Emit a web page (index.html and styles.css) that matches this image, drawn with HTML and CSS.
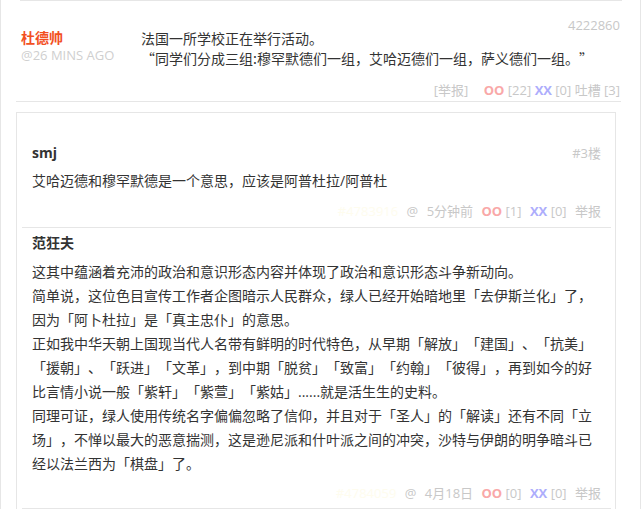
FILE: index.html
```html
<!DOCTYPE html>
<html lang="zh-CN">
<head>
    <meta charset="UTF-8">
    <meta name="viewport" content="width=device-width, initial-scale=1.0">
    <title>吐槽</title>
    <link rel="stylesheet" href="styles.css">
</head>
<body>
    <div class="page">
        <div class="prev-line"></div>

        <div class="comment">
            <div class="comment-id">4222860</div>
            <div class="comment-main">
                <div class="author">
                    <div class="author-name">杜德帅</div>
                    <div class="author-time">@26 MINS AGO</div>
                </div>
                <div class="comment-text">
                    法国一所学校正在举行活动。<br>
                    “同学们分成三组:穆罕默德们一组，艾哈迈德们一组，萨义德们一组。”
                </div>
            </div>
            <div class="comment-footer">
                <span class="muted">[举报]</span>
                <span class="oo gap">OO</span> <span class="muted">[22]</span>
                <span class="xx">XX</span> <span class="muted">[0] 吐槽 [3]</span>
            </div>
        </div>

        <div class="replies">
            <div class="reply reply-first">
                <div class="reply-head">
                    <span class="reply-name">smj</span>
                    <span class="reply-floor">#3楼</span>
                </div>
                <p class="reply-text">艾哈迈德和穆罕默德是一个意思，应该是阿普杜拉/阿普杜</p>
                <div class="reply-footer">
                    <span class="pale">#4783916</span>
                    <span class="muted sp">@</span>
                    <span class="muted sp">5分钟前</span>
                    <span class="oo sp">OO</span> <span class="muted">[1]</span>
                    <span class="xx sp">XX</span> <span class="muted">[0]</span>
                    <span class="muted sp">举报</span>
                </div>
            </div>

            <div class="reply">
                <div class="reply-head">
                    <span class="reply-name">范狂夫</span>
                </div>
                <div class="reply-body">
                    <p class="reply-text">这其中蕴涵着充沛的政治和意识形态内容并体现了政治和意识形态斗争新动向。</p>
                    <p class="reply-text">简单说，这位色目宣传工作者企图暗示人民群众，绿人已经开始暗地里「去伊斯兰化」了，因为「阿卜杜拉」是「真主忠仆」的意思。</p>
                    <p class="reply-text">正如我中华天朝上国现当代人名带有鲜明的时代特色，从早期「解放」「建国」、「抗美」「援朝」、「跃进」「文革」，到中期「脱贫」「致富」「约翰」「彼得」，再到如今的好比言情小说一般「紫轩」「紫萱」「紫姑」......就是活生生的史料。</p>
                    <p class="reply-text">同理可证，绿人使用传统名字偏偏忽略了信仰，并且对于「圣人」的「解读」还有不同「立场」，不惮以最大的恶意揣测，这是逊尼派和什叶派之间的冲突，沙特与伊朗的明争暗斗已经以法兰西为「棋盘」了。</p>
                </div>
                <div class="reply-footer">
                    <span class="pale">#4784059</span>
                    <span class="muted sp">@</span>
                    <span class="muted sp">4月18日</span>
                    <span class="oo sp">OO</span> <span class="muted">[0]</span>
                    <span class="xx sp">XX</span> <span class="muted">[0]</span>
                    <span class="muted sp">举报</span>
                </div>
            </div>
        </div>
    </div>
</body>
</html>
```

FILE: styles.css
```css
html, body {
    margin: 0;
    padding: 0;
    background-color: #fff;
}
body {
    font-family: "Open Sans", "Noto Sans CJK SC", sans-serif;
    color: #333;
    font-size: 14px;
    text-spacing-trim: space-all;
}
.page {
    border-left: 1px solid #e6e6e6;
    border-right: 1px solid #e6e6e6;
    min-height: 100vh;
    box-sizing: border-box;
    padding: 0 19px 0 15px;
    overflow: hidden;
}
.prev-line {
    border-top: 1px solid #e6e6e6;
    margin: 0 -1px 0 4px;
}
.comment {
    padding: 18px 1px 3px 5px;
    border-bottom: 1px solid #e6e6e6;
}
.comment-id {
    text-align: right;
    font-size: 13px;
    line-height: 12px;
    margin-bottom: -3px;
    color: #c8c8c8;
}
.comment-main {
    display: flex;
}
.author {
    width: 120px;
    flex-shrink: 0;
}
.author-name {
    color: #f2501f;
    font-weight: bold;
    line-height: 19px;
}
.author-time {
    color: #cfcfcf;
    font-size: 13px;
    line-height: 16px;
}
.comment-text {
    font-family: "Noto Sans CJK SC", sans-serif;
    line-height: 20px;
}
.comment-footer,
.reply-footer {
    text-align: right;
    font-size: 13px;
    line-height: 16px;
}
.comment-footer {
    margin-top: 14px;
}
.muted {
    color: #c8c8c8;
}
.pale {
    color: #fefcee;
}
.oo {
    color: #f9a8a8;
    font-weight: bold;
}
.xx {
    color: #adadfc;
    font-weight: bold;
}
.gap {
    margin-left: 12px;
}
.sp {
    margin-left: 5px;
}
.replies {
    margin: 10px 5px 0 0;
    border: 1px solid #e6e6e6;
    border-bottom: none;
}
.reply {
    margin: 0 4px 0 5px;
    padding: 5px 10px 7px 10px;
    border-bottom: 1px solid #e6e6e6;
}
.reply-first {
    padding-top: 30px;
    padding-bottom: 8px;
}
.reply-head {
    display: flex;
    justify-content: space-between;
    align-items: center;
    line-height: 20px;
}
.reply-name {
    font-weight: bold;
    color: #333;
}
.reply-floor {
    color: #c8c8c8;
    font-size: 13px;
}
.reply-text {
    margin: 0;
    line-height: 24px;
}
.reply-first .reply-text {
    margin-top: 6px;
}
.reply-body {
    margin-top: 7px;
}
.reply-footer {
    margin-top: 10px;
}
.reply-body + .reply-footer {
    margin-top: 9px;
}
```
